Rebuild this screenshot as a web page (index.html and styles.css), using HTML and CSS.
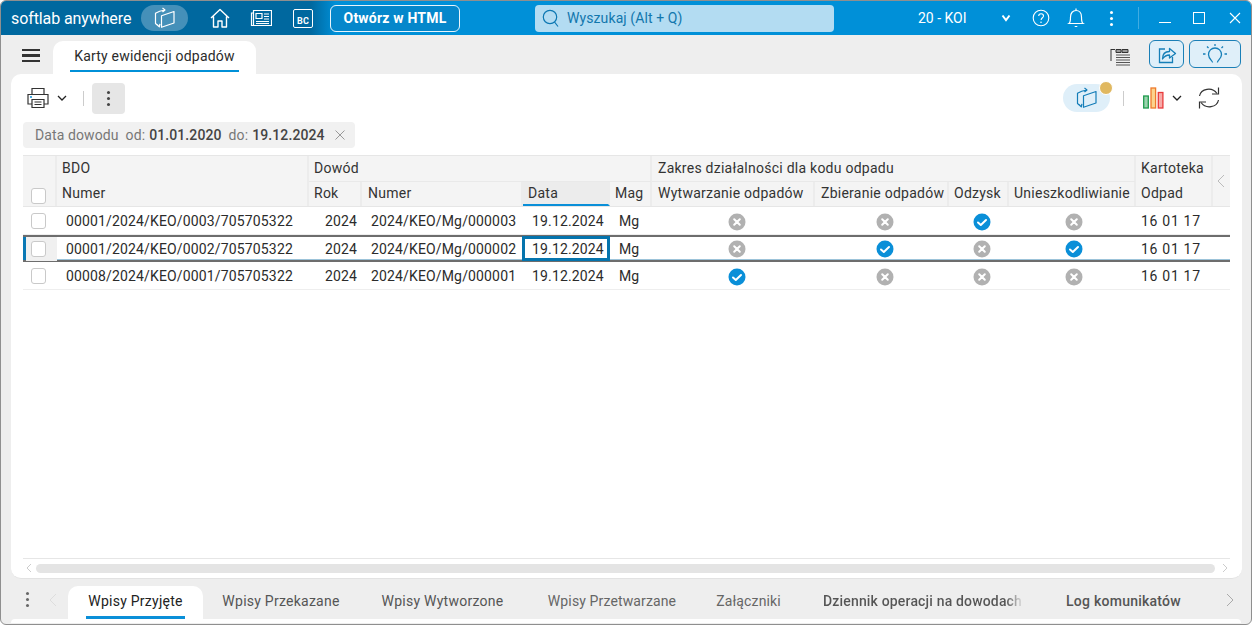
FILE: index.html
```html
<!DOCTYPE html>
<html lang="pl">
<head>
<meta charset="utf-8">
<title>Karty ewidencji odpadów</title>
<link rel="stylesheet" href="styles.css">
</head>
<body>
<svg class="defs" width="0" height="0">
  <symbol id="no" viewBox="0 0 18 18"><circle cx="9" cy="9" r="8.500" fill="#b1b1b1"/><path d="M6.200 6.200l5.600 5.600M11.800 6.200l-5.600 5.600" stroke="#fff" stroke-width="2" stroke-linecap="round"/></symbol>
  <symbol id="yes" viewBox="0 0 18 18"><circle cx="9" cy="9" r="8.500" fill="#0a8fd8"/><path d="M5 9.500l2.800 2.500 5.200-5" fill="none" stroke="#fff" stroke-width="2" stroke-linecap="round" stroke-linejoin="round"/></symbol>
  <symbol id="cards" viewBox="0 0 21 22"><path d="M10.500 3C6.500 3.500 3.500 4.500 1 6.200V16.500l3.800 3.300M8 1l2.500 2L8 5M2.500 17.500l2.300 2.300 .6-3M7 8.800L19.500 4.500V16L7 20.300z" fill="none" stroke="currentColor" stroke-width="1.200" stroke-linejoin="round"/></symbol>
</svg>
<div class="window">
  <header class="topbar">
    <span class="logo">softlab anywhere</span>
    <span class="pill"><svg class="i22"><use href="#cards"/></svg></span>
    <svg class="ico home" viewBox="0 0 20 20" width="20" height="20"><path d="M1 10L10 1.500 19 10M3.500 8.500V19H8v-6h4v6h4.500V8.500" fill="none" stroke="#fff" stroke-width="1.400" stroke-linejoin="round"/></svg>
    <svg class="ico news" viewBox="0 0 22 18" width="22" height="18"><path d="M3.500 1.500h18v15H1.500V4h2zM3.500 4v12.500" fill="none" stroke="#fff" stroke-width="1.200"/><path d="M6 4.500h6v5H6zM14 5h5M14 7.500h5M14 10h5M6 12.500h13M6 14.500h13" fill="none" stroke="#fff" stroke-width="1.200"/></svg>
    <span class="bc">BC</span>
    <button class="html-btn">Otwórz w HTML</button>
    <div class="search">
      <svg viewBox="0 0 18 18" width="18" height="18"><circle cx="8" cy="8" r="6.700" fill="none" stroke="#0d78b3" stroke-width="1.200"/><path d="M12.500 13l3.500 4.500" stroke="#0d78b3" stroke-width="1.200"/></svg>
      <span>Wyszukaj (Alt + Q)</span>
    </div>
    <span class="company">20 - KOI</span>
    <svg class="ico chev" viewBox="0 0 10 8" width="10" height="8"><path d="M1.500 1.500L5 6l3.500-4.500" fill="none" stroke="#fff" stroke-width="2"/></svg>
    <svg class="ico help" viewBox="0 0 18 18" width="18" height="18"><circle cx="9" cy="9" r="7.800" fill="none" stroke="#fff" stroke-width="1.100"/><path d="M6.700 7c0-3 4.800-3 4.800 0 0 1.800-2.400 1.800-2.400 4" fill="none" stroke="#fff" stroke-width="1.100"/><circle cx="9" cy="13.300" r=".8" fill="#fff"/></svg>
    <svg class="ico bell" viewBox="0 0 18 20" width="18" height="20"><path d="M2 15.500c1.500-1 1.500-3 1.500-6.500 0-4 2.300-6.500 5.500-6.500s5.500 2.500 5.500 6.500c0 3.500 0 5.500 1.500 6.500zM7.700 18.500h2.600M9 .5v2" fill="none" stroke="#fff" stroke-width="1.200"/></svg>
    <span class="dots light"><i></i><i></i><i></i></span>
    <span class="divider"></span>
    <span class="win-min"></span>
    <span class="win-max"></span>
    <svg class="ico win-x" viewBox="0 0 12 12" width="12" height="12"><path d="M1 1l10 10M11 1L1 11" stroke="#fff" stroke-width="1.100"/></svg>
  </header>

  <nav class="tabbar">
    <span class="burger"><i></i><i></i><i></i></span>
    <div class="tab"><span>Karty ewidencji odpadów</span></div>
    <svg class="ico tree" viewBox="0 0 20 18" width="20" height="18"><path d="M1 1v12M1 1.500h4M6 1.500h5v3H6zM12 1.500h6v3h-6z" fill="#999" stroke="#333" stroke-width="1"/><path d="M6 7h14M6 9.500h14M6 12h14M6 14.500h14M6 17h14" stroke="#555" stroke-width="1.200"/></svg>
    <button class="sq share"><svg viewBox="0 0 20 20" width="20" height="20"><path d="M8 5H2.500v13.500h13V13" fill="none" stroke="#167fb8" stroke-width="1.300"/><path d="M5.500 15c0-5 3-7.500 7-7.500V4.500l6 5-6 4.500v-3c-3 0-5 1-7 4z" fill="none" stroke="#167fb8" stroke-width="1.300" stroke-linejoin="round"/></svg></button>
    <button class="sq bulb"><svg viewBox="0 0 26 22" width="26" height="22"><path d="M10.500 19.500c.5-1.500-4-3.500-4-8a6.500 6.500 0 0 1 13 0c0 4.500-4.500 6-4 8" fill="none" stroke="#167fb8" stroke-width="1.300"/><path d="M13 1v2M5 3.500l1.500 1.500M21 3.500L19.500 5M1 11h2.500M22.500 11H25" stroke="#167fb8" stroke-width="1.300"/></svg></button>
  </nav>

  <main class="card">
    <div class="toolbar">
      <svg class="ico printer" viewBox="0 0 22 22" width="22" height="22"><path d="M5 7V1.500h12V7M5 17H1V7.500h20V17h-4M5 12.500h12v8H5zM7.500 15h7M7.500 17.500h7" fill="none" stroke="#333" stroke-width="1.200"/><path d="M3 10h2" stroke="#0a8fd8" stroke-width="1.400"/></svg>
      <svg class="ico small-chev" viewBox="0 0 10 6" width="10" height="6"><path d="M1 1l4 4 4-4" fill="none" stroke="#222" stroke-width="1.300"/></svg>
      <span class="tdiv"></span>
      <button class="more"><span class="dots dark"><i></i><i></i><i></i></span></button>
      <span class="tool-pill"><svg class="i22"><use href="#cards"/></svg><b class="dot"></b></span>
      <span class="tdiv right"></span>
      <svg class="ico chart" viewBox="0 0 22 22" width="22" height="22"><rect x=".7" y="9" width="4.600" height="12" fill="#9bd3ae" stroke="#1f9a4d" stroke-width="1.300"/><rect x="8" y="1" width="4.600" height="20" fill="#fbd38d" stroke="#ee7a2b" stroke-width="1.300"/><rect x="15.300" y="5.500" width="4.600" height="15.500" fill="#f7aaa8" stroke="#e83b3b" stroke-width="1.300"/></svg>
      <svg class="ico small-chev chart-chev" viewBox="0 0 10 6" width="10" height="6"><path d="M1 1l4 4 4-4" fill="none" stroke="#222" stroke-width="1.300"/></svg>
      <svg class="ico refresh" viewBox="0 0 24 24" width="24" height="24"><path d="M2.500 10C4 2.500 15 .5 20 7.500M21.500 14c-1.500 7.500-12.500 9.500-17.500 2.500" fill="none" stroke="#333" stroke-width="1.200"/><path d="M21.500 1.500v6.500H15M2.500 22.500V16H9" fill="none" stroke="#333" stroke-width="1.200"/></svg>
    </div>

    <div class="chip">
      <span class="chip-label">Data dowodu</span>
      <span class="chip-key">od:</span><b>01.01.2020</b>
      <span class="chip-key">do:</span><b>19.12.2024</b>
      <svg viewBox="0 0 10 10" width="10" height="10"><path d="M.5.500l9 9M9.500.500l-9 9" stroke="#999" stroke-width="1"/></svg>
    </div>

    <div class="grid-wrap">
      <div class="head">
        <div class="h corner"><span class="box"></span></div>
        <div class="h g bdo">BDO</div>
        <div class="h g dow">Dowód</div>
        <div class="h g zak">Zakres działalności dla kodu odpadu</div>
        <div class="h g kar">Kartoteka</div>
        <div class="h arrow"><svg viewBox="0 0 8 14" width="8" height="14"><path d="M7 1L1 7l6 6" fill="none" stroke="#bbb" stroke-width="1"/></svg></div>
        <div class="h s c2">Numer</div>
        <div class="h s">Rok</div>
        <div class="h s pad6">Numer</div>
        <div class="h s sorted">Data</div>
        <div class="h s">Mag</div>
        <div class="h s pad6">Wytwarzanie odpadów</div>
        <div class="h s pad6">Zbieranie odpadów</div>
        <div class="h s">Odzysk</div>
        <div class="h s">Unieszkodliwianie</div>
        <div class="h s">Odpad</div>
      </div>

      <div class="row">
        <div class="c check"><span class="box"></span></div>
        <div class="c">00001/2024/KEO/0003/705705322</div>
        <div class="c year">2024</div>
        <div class="c">2024/KEO/Mg/000003</div>
        <div class="c date">19.12.2024</div>
        <div class="c">Mg</div>
        <div class="c m"><svg class="st"><use href="#no"/></svg></div>
        <div class="c m"><svg class="st"><use href="#no"/></svg></div>
        <div class="c m"><svg class="st"><use href="#yes"/></svg></div>
        <div class="c m m4"><svg class="st"><use href="#no"/></svg></div>
        <div class="c code">16 01 17</div>
        <div class="c"></div>
      </div>
      <div class="row selected">
        <div class="c check"><span class="box"></span></div>
        <div class="c">00001/2024/KEO/0002/705705322</div>
        <div class="c year">2024</div>
        <div class="c">2024/KEO/Mg/000002</div>
        <div class="c date active">19.12.2024</div>
        <div class="c">Mg</div>
        <div class="c m"><svg class="st"><use href="#no"/></svg></div>
        <div class="c m"><svg class="st"><use href="#yes"/></svg></div>
        <div class="c m"><svg class="st"><use href="#no"/></svg></div>
        <div class="c m m4"><svg class="st"><use href="#yes"/></svg></div>
        <div class="c code">16 01 17</div>
        <div class="c"></div>
      </div>
      <div class="row">
        <div class="c check"><span class="box"></span></div>
        <div class="c">00008/2024/KEO/0001/705705322</div>
        <div class="c year">2024</div>
        <div class="c">2024/KEO/Mg/000001</div>
        <div class="c date">19.12.2024</div>
        <div class="c">Mg</div>
        <div class="c m"><svg class="st"><use href="#yes"/></svg></div>
        <div class="c m"><svg class="st"><use href="#no"/></svg></div>
        <div class="c m"><svg class="st"><use href="#no"/></svg></div>
        <div class="c m m4"><svg class="st"><use href="#no"/></svg></div>
        <div class="c code">16 01 17</div>
        <div class="c"></div>
      </div>
    </div>

    <div class="hscroll">
      <svg viewBox="0 0 6 10" width="6" height="10"><path d="M5 1L1 5l4 4" fill="none" stroke="#ccc" stroke-width="1"/></svg>
      <span class="thumb"></span>
      <svg viewBox="0 0 6 10" width="6" height="10"><path d="M1 1l4 4-4 4" fill="none" stroke="#ccc" stroke-width="1"/></svg>
    </div>
  </main>

  <footer class="bottom">
    <span class="dots grey"><i></i><i></i><i></i></span>
    <svg class="bl" viewBox="0 0 8 14" width="8" height="14"><path d="M7 1L1 7l6 6" fill="none" stroke="#ddd" stroke-width="1"/></svg>
    <div class="btab on"><span>Wpisy Przyjęte</span></div>
    <div class="btab w2">Wpisy Przekazane</div>
    <div class="btab w3">Wpisy Wytworzone</div>
    <div class="btab w4 dim">Wpisy Przetwarzane</div>
    <div class="btab w5 dim">Załączniki</div>
    <div class="btab w6"><span class="fade">Dziennik operacji na dowodach</span></div>
    <div class="btab w7">Log komunikatów</div>
    <svg class="br" viewBox="0 0 8 14" width="8" height="14"><path d="M1 1l6 6-6 6" fill="none" stroke="#aaa" stroke-width="1"/></svg>
  </footer>
  <div class="foot-strip"></div>
</div>
</body>
</html>
```
FILE: styles.css
```css
* { box-sizing: border-box; }
html, body { margin: 0; height: 100%; overflow: hidden; }
body { background: #fff; font-family: Roboto, "Liberation Sans", sans-serif; font-size: 14px; color: #2b2b2b; }
.defs { display: block; height: 0; }
.window { width: 1252px; height: 625px; display: flex; flex-direction: column; background: #eeeeee; border: 1px solid #8f8f8f; border-radius: 6px; overflow: hidden; }
.ico { display: block; flex: none; }
.i22 { width: 22px; height: 22px; display: block; }
button { font-family: inherit; padding: 0; }

/* top bar */
.topbar { height: 34px; flex: none; display: flex; align-items: center; background: linear-gradient(90deg, #00689f 0, #00689f 310px, #0090d8 335px, #0090d8 100%); color: #fff; }
.logo { margin-left: 10px; width: 120px; font-size: 16px; letter-spacing: -.1px; white-space: nowrap; }
.pill { margin-left: 10px; width: 47px; height: 26px; border-radius: 13px; background: rgba(255,255,255,.27); display: flex; align-items: center; justify-content: center; color: #fff; }
.home { margin-left: 22px; }
.news { margin-left: 20px; }
.bc { margin-left: 21px; width: 20px; height: 19px; border: 1.2px solid #fff; border-radius: 2px; font-size: 9px; font-weight: 700; letter-spacing: .3px; display: flex; align-items: flex-end; justify-content: center; padding-bottom: 1px; }
.html-btn { margin-left: 17px; width: 130px; height: 27px; border: 1px solid #e8f4fb; border-radius: 6px; background: #0587cb; color: #fff; font-weight: 700; font-size: 14px; letter-spacing: .2px; }
.search { margin-left: 75px; width: 299px; height: 27px; border-radius: 4px; background: #b3dcf2; color: #1277ad; display: flex; align-items: center; gap: 7px; padding-left: 7px; letter-spacing: .1px; }
.company { margin-left: 84px; width: 83px; color: #fff; font-size: 14px; }
.help { margin-left: 21px; }
.bell { margin-left: 17px; }
.dots { display: flex; flex-direction: column; gap: 3px; align-items: center; }
.dots i { width: 3px; height: 3px; border-radius: 50%; display: block; }
.dots.light { margin-left: 23px; width: 6px; }
.dots.light i { background: #fff; }
.dots.dark i { background: #444; }
.dots.grey i { background: #666; }
.divider { margin-left: 24px; width: 1px; height: 22px; background: rgba(255,255,255,.25); }
.win-min { margin-left: 20px; width: 12px; height: 1px; background: #fff; margin-top: 9px; }
.win-max { margin-left: 22px; width: 12px; height: 12px; border: 1px solid #fff; }
.win-x { margin-left: 24px; }

/* tabs */
.tabbar { height: 39px; flex: none; display: flex; align-items: flex-end; }
.burger { margin: 0 0 12px 21px; width: 18px; display: flex; flex-direction: column; gap: 3px; }
.burger i { display: block; height: 2.500px; background: #333; }
.tab { margin-left: 13px; width: 203px; height: 33px; background: #fff; border-radius: 10px 10px 0 0; display: flex; justify-content: center; }
.tab span { width: 169px; height: 31px; border-bottom: 2px solid #0090d8; text-align: center; line-height: 30px; white-space: nowrap; letter-spacing: .2px; }
.tree { margin: 0 0 8px 854px; }
.sq { height: 28px; background: #dfeff9; border: 1px solid #1a7fb7; border-radius: 6px; display: flex; align-items: center; justify-content: center; margin-bottom: 6px; }
.share { margin-left: 19px; width: 35px; }
.bulb { margin-left: 5px; width: 52px; }

/* card */
.card { height: 505px; flex: none; margin: 0 9px 0 10px; background: #fff; border-radius: 10px; border-bottom: 1px solid #e2e2e2; display: flex; flex-direction: column; padding: 8px 12px 0 12px; }
.toolbar { height: 32px; flex: none; display: flex; align-items: center; padding-left: 4px; }
.small-chev { margin-left: 8px; }
.chart-chev { margin-left: 7px; }
.tdiv { margin-left: 16px; width: 1px; height: 15px; background: #ccc; }
.more { margin-left: 8px; width: 33px; height: 31px; border: 0; background: #e6e6e6; border-radius: 4px; display: flex; align-items: center; justify-content: center; }
.tool-pill { margin-left: 938px; width: 47px; height: 28px; border-radius: 14px; background: #dfeff9; color: #147db8; display: flex; align-items: center; justify-content: center; position: relative; }
.dot { position: absolute; right: -3px; top: -3px; width: 14px; height: 14px; border-radius: 50%; background: #e0b860; border: 1.500px solid #fff; }
.tdiv.right { margin-left: 13px; }
.chart { margin-left: 19px; }
.refresh { margin-left: 15px; }
.chip { margin-top: 8px; width: 332px; height: 26px; flex: none; background: #f1f1f1; border-radius: 4px; display: flex; align-items: center; padding-left: 12px; font-size: 14px; white-space: nowrap; color: #777; letter-spacing: .1px; }
.chip b { font-weight: 500; color: #444; margin-left: 4px; }
.chip-key { margin-left: 7px; }
.chip svg { margin-left: 10px; }

/* grid */
.grid-wrap { margin-top: 7px; flex: 1; min-height: 0; border-bottom: 1px solid #e6e6e6; --cols: 34px 252px 53px 161px 87px 42px 163px 134px 60px 127px 77px 17px; }
.head { display: grid; grid-template-columns: var(--cols); grid-template-rows: 26px 24px; height: 52px; background: #f4f4f4; border-top: 1px solid #e6e6e6; border-bottom: 1px solid #e6e6e6; }
.h { padding-left: 5px; line-height: 25px; white-space: nowrap; color: #333; letter-spacing: .25px; border-right: 2px solid #ececec; }
.h.s { line-height: 23px; }
.h.pad6, .zak { padding-left: 6px; }
.corner { grid-row: 1 / span 2; grid-column: 1; display: flex; align-items: flex-end; padding: 0 0 2px 8px; }
.bdo { grid-column: 2; }
.dow { grid-column: 3 / span 4; }
.zak { grid-column: 7 / span 4; }
.kar { grid-column: 11; }
.arrow { grid-column: 12; grid-row: 1 / span 2; border: 0; display: flex; align-items: center; padding-left: 4px; }
.g { border-bottom: 1px solid #e9e9e9; }
.bdo, .kar { border-bottom: 0; }
.s.c2 { grid-column: 2; }
.sorted { background: #ececec; border-bottom: 2px solid #0a8fd8; }
.box { display: block; width: 15px; height: 16px; background: #fff; border: 1px solid #c9c9c9; border-radius: 3px; }
.row { display: grid; grid-template-columns: var(--cols); height: 28px; border-bottom: 1px solid #eee; position: relative; }
.c { padding-left: 9px; line-height: 28px; white-space: nowrap; letter-spacing: .15px; }
.c.year { padding-left: 16px; }
.c.date { padding-left: 9px; }
.c.code { padding-left: 5px; letter-spacing: .7px; }
.check { padding: 6px 0 0 8px; }
.m { display: flex; align-items: center; justify-content: center; padding: 1px 0 0 6px; }
.m.m4 { padding-left: 3px; }
.st { width: 18px; height: 18px; display: block; }
.row.selected { border-top: 2px solid #6d6d6d; border-bottom: 2px solid #6d6d6d; height: 27px; box-shadow: inset 3px 0 0 #0a78b4, inset 0 -1px 0 #9cc3d9; }
.row.selected .check { background: #f0f0f0; margin-left: 3px; padding: 4px 0 0 5px; }
.row.selected .c { line-height: 24px; }
.row.selected .m { padding-top: 0; }
.row.selected .active { border: 3px solid #0574ad; line-height: 20px; padding-left: 7px; margin: -1px 0 -1px -1px; height: 25px; background: #fff; }

/* scrollbar */
.hscroll { height: 19px; flex: none; display: flex; align-items: center; gap: 4px; padding-bottom: 1px; }
.hscroll svg { margin-left: 3px; flex: none; }
.thumb { display: block; width: 1179px; height: 9px; border-radius: 5px; background: #e4e4e4; }

/* bottom tabs */
.bottom { height: 40px; flex: none; display: flex; align-items: flex-end; }
.bottom .dots { margin: 0 0 12px 24px; width: 4px; }
.bl { margin: 0 0 12px 20px; }
.btab { height: 33px; line-height: 31px; white-space: nowrap; color: #555; text-align: center; letter-spacing: .25px; }
.btab.on { margin-left: 11px; width: 135px; background: #fff; border-radius: 10px 10px 0 0; color: #222; display: flex; justify-content: center; }
.btab.on span { width: 99px; height: 33px; border-bottom: 3px solid #0a8fd8; display: block; }
.w2 { margin-left: 19px; width: 118px; }
.w3 { margin-left: 41px; width: 123px; }
.w4 { margin-left: 43px; width: 130px; }
.w5 { margin-left: 39px; width: 65px; }
.btab.dim { color: #666; letter-spacing: .13px; }
.w6 { margin-left: 42px; width: 200px; font-weight: 500; text-align: left; }
.btab.w6 { letter-spacing: .17px; }
.fade { background: linear-gradient(90deg, #555 92%, #ddd 100%); -webkit-background-clip: text; background-clip: text; color: transparent; }
.w7 { margin-left: 43px; width: 115px; font-weight: 500; }
.br { margin: 0 0 12px 45px; }
.foot-strip { height: 4px; flex: none; margin: 0 10px; background: #fff; border-radius: 5px 5px 0 0; }
```
